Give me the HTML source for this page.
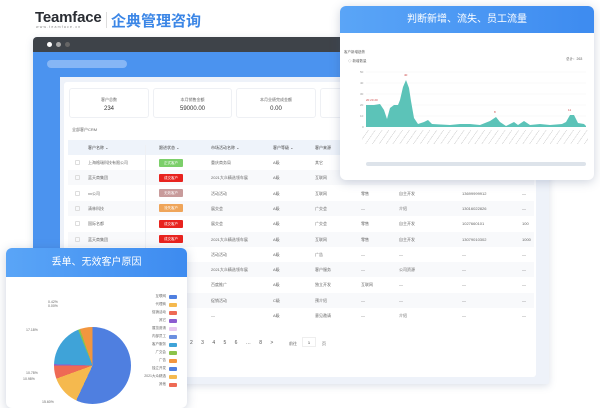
<!DOCTYPE html>
<html><head><meta charset="utf-8"><style>
*{margin:0;padding:0;box-sizing:border-box}
body{width:600px;height:400px;background:#fff;font-family:"Liberation Sans","Noto Sans CJK SC",sans-serif;position:relative;overflow:hidden;color:#333}
.abs{position:absolute}
.t{font-size:4px;color:#666;white-space:nowrap}
.card{background:#fff;border-radius:3px;border:1px solid #eef0f4;text-align:center}
.badge{position:absolute;width:24px;height:8px;border-radius:1px;color:#fff;font-size:3.5px;text-align:center;line-height:8px}
</style></head><body>
<div class="abs" style="left:35px;top:9px;font-size:15px;font-weight:bold;color:#2a2d33;letter-spacing:-0.2px">Teamface</div>
<div class="abs" style="left:36px;top:25px;font-size:3.5px;color:#888;letter-spacing:1.2px">www.teamface.cn</div>
<div class="abs" style="left:106px;top:12px;width:1px;height:16px;background:#ddd"></div>
<div class="abs" style="left:111px;top:10px;font-size:15px;color:#3b86e6;font-weight:bold">企典管理咨询</div>

<!-- browser -->
<div class="abs" style="left:33px;top:37px;width:516px;height:347px;background:#eef2f9;border-radius:4px 4px 2px 2px;box-shadow:0 2px 8px rgba(80,100,140,.2);overflow:hidden">
 <div class="abs" style="left:0;top:0;width:516px;height:15px;background:#3e4349"></div>
 <div class="abs" style="left:14px;top:5px;width:5px;height:5px;border-radius:50%;background:#fff"></div>
 <div class="abs" style="left:23px;top:5px;width:5px;height:5px;border-radius:50%;background:#aaa"></div>
 <div class="abs" style="left:32px;top:5px;width:5px;height:5px;border-radius:50%;background:#666"></div>
 <div class="abs" style="left:0;top:15px;width:516px;height:25px;background:#4b93ef"></div>
 <div class="abs" style="left:14px;top:23px;width:80px;height:8px;border-radius:4px;background:#86b6f5"></div>
 <div class="abs" style="left:0;top:40px;width:27px;height:310px;background:#4b93ef"></div>
 <div class="abs" style="left:31px;top:45px;width:472px;height:295px;background:#fff;border-radius:3px"></div>
</div>
<!-- stats -->
<div class="abs card" style="left:69px;top:88px;width:80px;height:30px"><div class="t" style="margin-top:8px">客户总数</div><div style="font-size:6px;margin-top:3px">234</div></div>
<div class="abs card" style="left:153px;top:88px;width:79px;height:30px"><div class="t" style="margin-top:8px">本月销售金额</div><div style="font-size:6px;margin-top:3px">59000.00</div></div>
<div class="abs card" style="left:236px;top:88px;width:80px;height:30px"><div class="t" style="margin-top:8px">本月业绩完成金额</div><div style="font-size:6px;margin-top:3px">0.00</div></div>
<div class="abs card" style="left:320px;top:88px;width:30px;height:30px"></div>
<div class="abs t" style="left:72px;top:127px">全部客户CRM</div>
<!-- table -->
<div class="abs" style="left:68px;top:140px;width:466px;height:15px;background:#eef3fa"></div>
<div class="abs t" style="left:88px;top:145px;color:#444">客户名称 ⌄</div>
<div class="abs t" style="left:159px;top:145px;color:#444">跟进状态 ⌄</div>
<div class="abs t" style="left:211px;top:145px;color:#444">市场活动名称 ⌄</div>
<div class="abs t" style="left:273px;top:145px;color:#444">客户等级 ⌄</div>
<div class="abs t" style="left:315px;top:145px;color:#444">客户来源</div>
<div id="rows"></div>
<div class="abs" style="left:145px;top:145px;width:1px;height:185px;background:#eef0f4"></div>
<script>
var rows=[["上海格瑞科技有限公司","#7ccf6a","重庆商务局","A级","其它","","","","","正式客户"],
["蓝天商集团","#e8231e","2021大众精选领车展","A级","互联网","","","","","成交客户"],
["xx公司","#c89b9b","活动活动","A级","互联网","零售","自主开发","13699999912","—","无效客户"],
["清林科技","#efa55a","展交会","A级","广交会","—","介绍","13016022826","—","流失客户"],
["国际名都","#e8231e","展交会","A级","广交会","零售","自主开发","1027660101","100","成交客户"],
["蓝天商集团","#e8231e","2021大众精选领车展","A级","互联网","零售","自主开发","13079010302","1000","成交客户"],
["","","活动活动","A级","广告","—","—","—","—"],
["","","2021大众精选领车展","A级","客户服务","—","公司资源","—","—"],
["","","百度推广","A级","独立开发","互联网","—","—","—"],
["","","促销活动","C级","预介绍","—","—","—","—"],
["","","—","A级","意见邀请","—","介绍","—","—"]];
var h="";var xs=[88,0,211,273,315,361,399,462,522];
rows.forEach(function(r,i){var y=155+i*15.3;
if(i%2)h+='<div class="abs" style="left:68px;top:'+y+'px;width:466px;height:15px;background:#f8f9fb"></div>';
h+='<div class="abs" style="left:75px;top:'+(y+5)+'px;width:5px;height:5px;border:1px solid #ddd;border-radius:1px"></div>';
for(var c=0;c<9;c++){if(c==1){if(r[1])h+='<div class="badge" style="left:159px;top:'+(y+3.5)+'px;background:'+r[1]+'">'+r[9]+'</div>';continue;}
if(r[c])h+='<div class="abs t" style="left:'+xs[c]+'px;top:'+(y+5)+'px">'+r[c]+'</div>';}
});
document.getElementById('rows').innerHTML=h;
</script>
<div class="abs t" style="left:190px;top:340px;font-size:5px;word-spacing:7px;color:#555">2 3 4 5 6 … 8 &gt;</div>
<div class="abs t" style="left:289px;top:341px">前往</div>
<div class="abs" style="left:302px;top:337px;width:14px;height:10px;border:1px solid #eee;font-size:4px;text-align:center;line-height:9px">1</div>
<div class="abs t" style="left:322px;top:341px">页</div>

<!-- line chart card -->
<div class="abs" style="left:340px;top:6px;width:254px;height:174px;background:#fff;border-radius:6px;box-shadow:0 2px 10px rgba(60,80,120,.25);overflow:hidden">
 <div style="height:27px;background:linear-gradient(90deg,#5aa5f7,#3d8bf0);color:#fff;font-size:10px;text-align:center;line-height:27px">判断新增、流失、员工流量</div>
 <div class="abs t" style="left:4px;top:44px;font-size:3.5px">客户新增趋势</div>
 <div class="abs t" style="left:8px;top:53px;font-size:3.5px">◇ 新增数量</div>
 <div class="abs t" style="left:226px;top:51px;font-size:3.5px">总计：263</div>
 <div class="abs" style="left:22px;top:124px;width:226px;height:14px;background:repeating-linear-gradient(125deg,transparent 0 5px,#d8d8d8 5px 5.6px)"></div>
 <svg class="abs" style="left:0;top:0" width="254" height="174">
  <g transform="translate(0,-6)">
  <g stroke="#eee" stroke-width=".4"><line x1="26" y1="72" x2="246" y2="72"/><line x1="26" y1="83" x2="246" y2="83"/><line x1="26" y1="94" x2="246" y2="94"/><line x1="26" y1="105" x2="246" y2="105"/><line x1="26" y1="116" x2="246" y2="116"/></g>
  <path fill="#5cc3b8" d="M26 127 L26 105 L34 105 L40 104 L44 110 L47 119 L50 108 L54 105 L58 105 L60 100 L63 87 L66 80 L69 88 L71 101 L74 118 L78 124 L84 122 L88 120 L92 124 L110 125 L120 124 L130 124 L140 125 L150 121 L156 117 L160 122 L166 126 L174 122 L178 125 L184 121 L190 125 L200 124 L210 125 L222 124 L226 122 L230 115 L234 115 L238 123 L244 124 L246 126 L246 127 Z"/>
  <g fill="#999" font-size="3" font-family="Liberation Sans"><text x="20" y="73">50</text><text x="20" y="84">40</text><text x="20" y="95">30</text><text x="20" y="106">20</text><text x="20" y="117">10</text><text x="22" y="128">0</text></g>
  <g fill="#c44" font-size="3" font-family="Liberation Sans"><text x="26" y="101">20 20 20</text><text x="64" y="76">40</text><text x="228" y="111">11</text><text x="154" y="113">8</text></g>
  </g>
  <rect x="26" y="156" width="220" height="4" rx="2" fill="#dde3ea"/>
 </svg>
</div>

<!-- pie card -->
<div class="abs" style="left:6px;top:248px;width:181px;height:160px;background:#fff;border-radius:6px;box-shadow:0 2px 10px rgba(60,80,120,.25);overflow:hidden">
 <div style="height:29px;background:linear-gradient(90deg,#5aa5f7,#3d8bf0);color:#fff;font-size:10px;text-align:center;line-height:29px">丢单、无效客户原因</div>
 <div class="abs" style="left:48px;top:79px;width:77px;height:77px;border-radius:50%;background:conic-gradient(#4f7fe0 0 205deg,#f5b94e 205deg 250deg,#ee6a55 250deg 270deg,#8c5bd0 270deg 272deg,#3fa3d8 272deg 338deg,#8bc34a 338deg 341deg,#f2963f 341deg 360deg)"></div>
 <div class="abs t" style="left:20px;top:123px;font-size:3.5px">10.78%</div>
 <div class="abs t" style="left:17px;top:129px;font-size:3.5px">10.98%</div>
 <div class="abs t" style="left:20px;top:80px;font-size:3.5px">17.18%</div>
 <div class="abs t" style="left:36px;top:152px;font-size:3.5px">15.60%</div>
 <div class="abs t" style="left:42px;top:52px;font-size:3.5px">0.42%<br>0.00%</div>
 <div id="leg"></div>
</div>
<script>
var L=[["互联网","#4f7fe0"],["代理商","#f5b94e"],["促销活动","#ee6a55"],["其它","#8c5bd0"],["展览邀请","#e8c8f0"],["内部员工","#6b8fe0"],["客户服务","#3fa3d8"],["广交会","#8bc34a"],["广告","#f2963f"],["独立开发","#4f7fe0"],["2021大众精选","#f5b94e"],["其他","#ee6a55"]],g="";
L.forEach(function(l,i){var y=47+i*8;g+='<div class="abs t" style="right:21px;top:'+(y-1)+'px;font-size:3.5px;text-align:right">'+l[0]+'</div><div class="abs" style="left:163px;top:'+y+'px;width:8px;height:4px;border-radius:1px;background:'+l[1]+'"></div>';});
document.getElementById('leg').innerHTML=g;
</script>
</body></html>
